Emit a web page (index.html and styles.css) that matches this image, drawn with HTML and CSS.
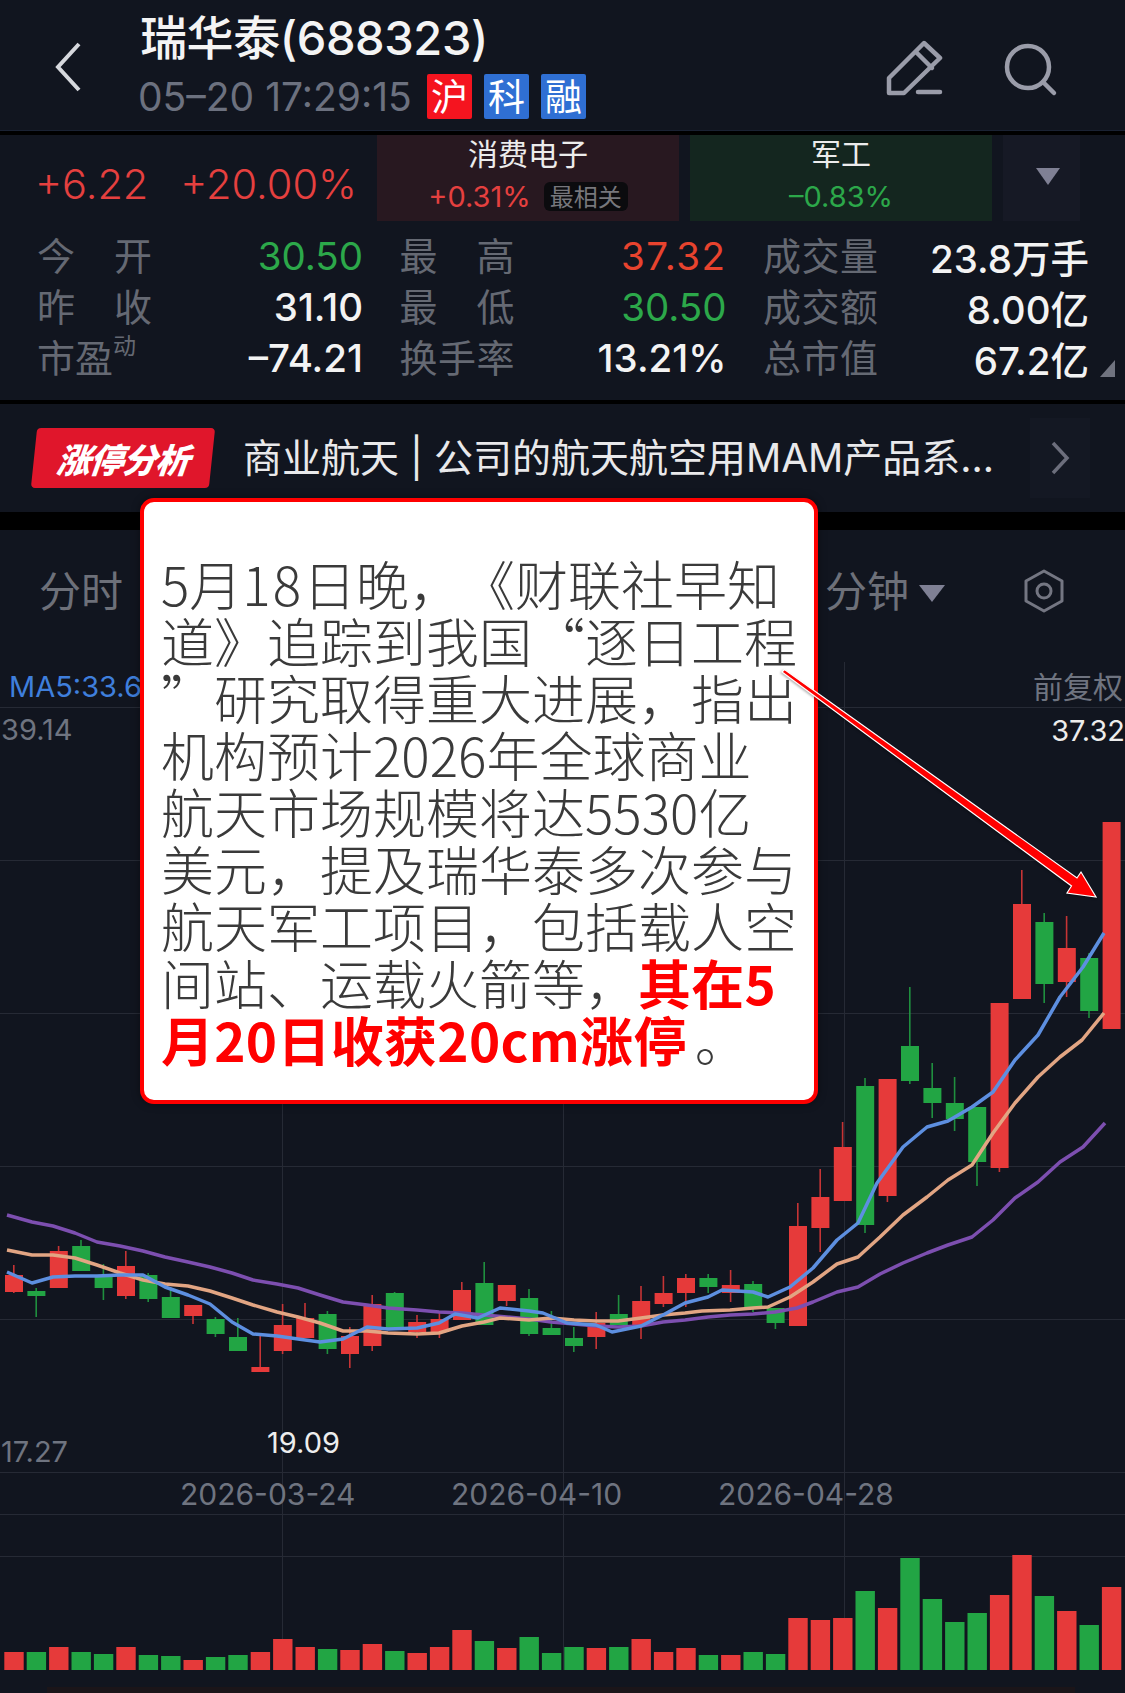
FILE: index.html
```html
<!DOCTYPE html>
<html lang="zh-CN">
<head>
<meta charset="UTF-8" />
<title>瑞华泰(688323)</title>
<meta name="viewport" content="width=device-width, initial-scale=1" />
<link rel="stylesheet" href="styles.css">
</head>
<body>
  <div class="page">
    <!-- TOP BAR -->
    <header class="topbar">
      <svg class="back" viewBox="0 0 28 52"><path d="M25 3 L4 26 L25 49" /></svg>
      <div class="stock">
        <div class="stock-name">瑞华泰(688323)</div>
        <div class="stock-sub">
          <span class="stock-time">05–20 17:29:15</span>
          <span class="tag tag-red">沪</span>
          <span class="tag tag-blue">科</span>
          <span class="tag tag-blue">融</span>
        </div>
      </div>
      <svg class="icon-edit" viewBox="0 0 60 56">
        <path d="M5 53 V38 L40 3 L56 18 L20 53 Z" />
        <path d="M32 12 L48 28" />
        <path d="M34 52 H56" />
      </svg>
      <svg class="icon-search" viewBox="0 0 56 56">
        <circle cx="24" cy="25" r="21" />
        <path d="M39 40 L50 51" />
      </svg>
    </header>

    <!-- QUOTE PANEL -->
    <section class="quote">
      <div class="quote-top">
        <div class="change">
          <span>+6.22</span>
          <span>+20.00%</span>
        </div>
        <div class="sector sector-up">
          <div class="sector-name">消费电子</div>
          <div class="sector-row">
            <span class="up">+0.31%</span>
            <span class="best">最相关</span>
          </div>
        </div>
        <div class="sector sector-down">
          <div class="sector-name">军工</div>
          <div class="sector-row">
            <span class="down">–0.83%</span>
          </div>
        </div>
        <div class="more"><i class="tri"></i></div>
      </div>
      <div class="stats">
        <div class="stat"><span class="lbl">今开</span><span class="val down">30.50</span></div>
        <div class="stat"><span class="lbl">最高</span><span class="val hi">37.32</span></div>
        <div class="stat"><span class="lbl">成交量</span><span class="val">23.8万手</span></div>
        <div class="stat"><span class="lbl">昨收</span><span class="val">31.10</span></div>
        <div class="stat"><span class="lbl">最低</span><span class="val down">30.50</span></div>
        <div class="stat"><span class="lbl">成交额</span><span class="val">8.00亿</span></div>
        <div class="stat"><span class="lbl lbl-left">市盈<sup>动</sup></span><span class="val">–74.21</span></div>
        <div class="stat"><span class="lbl">换手率</span><span class="val">13.21%</span></div>
        <div class="stat"><span class="lbl">总市值</span><span class="val">67.2亿</span></div>
      </div>
      <i class="corner"></i>
    </section>

    <!-- LIMIT UP BANNER -->
    <section class="banner">
      <div class="banner-tag"><span>涨停分析</span></div>
      <div class="banner-text">商业航天 | 公司的航天航空用MAM产品系...</div>
      <div class="banner-next">
        <svg viewBox="0 0 20 34"><path d="M3 2 L17 17 L3 32" /></svg>
      </div>
    </section>

    <!-- CHART -->
    <section class="chart">
      <div class="tabs">
        <span class="tab">分时</span>
        <div class="tabs-right">
          <span class="tab">分钟</span>
          <i class="tri tri-tab"></i>
          <svg class="icon-gear" viewBox="0 0 40 44">
            <path d="M20 2 L38 12 V32 L20 42 L2 32 V12 Z" />
            <circle cx="20" cy="22" r="7" />
          </svg>
        </div>
      </div>
      <svg class="kline" id="kline" viewBox="0 640 1125 1053">
        <text class="t-ma" x="9" y="697">MA5:33.6</text>
        <text class="t-axis" x="1" y="740">39.14</text>
        <text class="t-axis t-cjk" x="1123" y="698" text-anchor="end">前复权</text>
        <text class="t-bright" x="1125" y="741" text-anchor="end">37.32</text>
        <text class="t-axis" x="1" y="1462">17.27</text>
        <text class="t-bright" x="267" y="1453">19.09</text>
        <text class="t-date" x="180" y="1505">2026-03-24</text>
        <text class="t-date" x="451" y="1505">2026-04-10</text>
        <text class="t-date" x="718" y="1505">2026-04-28</text>
      </svg>
    </section>

    <!-- CALLOUT AND ARROW -->
    <div class="callout">
      5月<span class="wide">18</span>日晚，《财联社早知<br>
      道》追踪到我国“逐日工程<br>
      ”研究取得重大进展，指出<br>
      机构预计2026年全球商业<br>
      航天市场规模将达5530亿<br>
      美元，提及瑞华泰多次参与<br>
      航天军工项目，包括载人空<br>
      间站、运载火箭等，<b>其在5</b><br>
      <b class="last">月20日收获20cm涨停</b>。
    </div>
    <svg class="arrow" viewBox="0 0 330 250">
      <path d="M2 12 L4.5 9.5 L297 218 L301 212 L316 237 L287 233 L291.5 226 Z" />
    </svg>
  </div>
  <script src="script.js"></script>
</body>
</html>
```

FILE: styles.css
```css
:root {
  --bg: #11151f;
  --up: #e5403f;
  --down: #2ca84a;
  --label: #656973;
  --font: Inter, "Noto Sans CJK SC", sans-serif;
  --cjk: "Noto Sans CJK SC", sans-serif;
}

* {
  box-sizing: border-box;
}

html,
body {
  margin: 0;
  padding: 0;
  background: #000;
  font-family: var(--font);
}

.page {
  position: relative;
  width: 1125px;
  height: 1693px;
  overflow: hidden;
}

/* ------------ TOP BAR ------------- */
.topbar {
  height: 131px;
  background: var(--bg);
  border-bottom: 1px solid #1a2233;
  display: flex;
  align-items: flex-start;
  padding-left: 54px;
}
.back {
  width: 28px;
  height: 52px;
  margin-top: 41px;
  flex: none;
}
.back path {
  fill: none;
  stroke: #d6d8dd;
  stroke-width: 4;
}
.stock {
  margin-left: 58px;
  flex: 1;
}
.stock-name {
  margin-top: 8px;
  height: 60px;
  line-height: 60px;
  font-size: 47px;
  font-weight: 500;
  letter-spacing: -0.4px;
  color: #f4f4f4;
}
.stock-sub {
  display: flex;
  align-items: center;
  margin-top: 5px;
}
.stock-time {
  font-size: 39px;
  color: #6c717f;
  width: 289px;
  margin-left: -2px;
  white-space: nowrap;
}
.tag {
  width: 45px;
  height: 45px;
  line-height: 43px;
  margin-right: 12px;
  border-radius: 2px;
  text-align: center;
  font-size: 37px;
  color: #fff;
  font-family: var(--cjk);
}
.tag-red { background: #f5141f; }
.tag-blue { background: #2f6fd3; }
.icon-edit {
  width: 60px;
  height: 56px;
  margin: 40px 0 0 0;
  flex: none;
}
.icon-edit path,
.icon-search circle,
.icon-search path {
  fill: none;
  stroke: #9a9ca9;
  stroke-width: 4.5;
  stroke-linecap: round;
  stroke-linejoin: round;
}
.icon-search {
  width: 56px;
  height: 56px;
  margin: 42px 65px 0 60px;
  flex: none;
}

/* ------------ QUOTE ------------- */
.quote {
  position: relative;
  height: 265px;
  margin-top: 4px;
  background: var(--bg);
}
.quote-top {
  height: 86px;
  display: flex;
}
.change {
  width: 377px;
  padding: 24px 0 0 35px;
  display: flex;
  gap: 32px;
  font-size: 41.5px;
  font-weight: 300;
  color: var(--up);
}
.sector {
  width: 302px;
  margin-right: 11px;
  text-align: center;
  font-size: 29px;
}
.sector-up { background: #281820; }
.sector-down { background: #14261f; }
.sector-name {
  height: 36px;
  line-height: 34px;
  font-size: 30px;
  color: #ececec;
  font-family: var(--cjk);
}
.sector-row {
  display: flex;
  justify-content: center;
  align-items: center;
  gap: 13px;
  height: 50px;
}
.up { color: var(--up); }
.down { color: var(--down); }
.hi { color: #e8432e; }
.best {
  height: 29px;
  line-height: 28px;
  padding: 0 6px;
  border-radius: 6px;
  background: #0b0b0e;
  color: #77777c;
  font-size: 24px;
  font-family: var(--cjk);
}
.more {
  width: 77px;
  background: #161925;
  display: flex;
  justify-content: center;
  padding: 33px 0 0 12px;
}
.tri {
  display: block;
  width: 0;
  height: 0;
  border-left: 12px solid transparent;
  border-right: 12px solid transparent;
  border-top: 17px solid #7f8094;
}
.stats {
  display: grid;
  grid-template-columns: 326px 327px 326px;
  column-gap: 36.5px;
  padding: 9px 0 0 37px;
  grid-auto-rows: 51px;
}
.stat {
  display: flex;
  justify-content: space-between;
  align-items: center;
}
.lbl {
  position: relative;
  top: -2px;
  width: 115px;
  font-family: var(--cjk);
  font-size: 38px;
  color: var(--label);
  text-align: justify;
  text-align-last: justify;
  line-height: 51px;
}
.lbl-left {
  text-align-last: left;
}
.lbl sup {
  position: absolute;
  left: 76px;
  top: -1px;
  font-size: 23px;
  line-height: 30px;
}
.val {
  font-size: 38.5px;
  font-weight: 500;
  color: #f3f3f3;
}
.val.down { color: var(--down); font-weight: 400; }
.val.hi { color: #e8432e; font-weight: 400; letter-spacing: 1.5px; }
.corner {
  position: absolute;
  right: 10px;
  bottom: 23px;
  width: 0;
  height: 0;
  border-left: 15px solid transparent;
  border-bottom: 17px solid #70737f;
}

/* ------------ BANNER ------------- */
.banner {
  height: 108px;
  margin-top: 4px;
  background: var(--bg);
  display: flex;
  align-items: center;
  padding: 0 0 0 34px;
}
.banner-tag {
  width: 178px;
  height: 60px;
  background: #e0162b;
  border-radius: 4px;
  transform: skewX(-6deg);
  display: flex;
  align-items: center;
  justify-content: center;
  flex: none;
}
.banner-tag span {
  font-family: var(--cjk);
  font-size: 34px;
  font-weight: 900;
  font-style: italic;
  color: #fff;
  letter-spacing: -1px;
}
.banner-text {
  margin-left: 31px;
  width: 787px;
  white-space: nowrap;
  font-size: 39px;
  color: #e9e9eb;
  line-height: 50px;
}
.banner-next {
  width: 60px;
  height: 80px;
  background: #141823;
  display: flex;
  align-items: center;
  justify-content: center;
}
.banner-next svg {
  width: 20px;
  height: 34px;
}
.banner-next path {
  fill: none;
  stroke: #6c6e7c;
  stroke-width: 3.5;
}

/* ------------ CHART ------------- */
.chart {
  margin-top: 18px;
  height: 1163px;
  background: var(--bg);
}
.tabs {
  height: 110px;
  padding: 33px 0 0 39px;
  display: flex;
  justify-content: space-between;
}
.tabs-right {
  display: flex;
  padding-right: 61px;
}
.tab {
  font-family: var(--cjk);
  font-size: 42px;
  line-height: 52px;
  color: #6d7079;
}
.tri-tab {
  margin: 22px 0 0 10px;
  border-left-width: 13px;
  border-right-width: 13px;
}
.icon-gear {
  width: 40px;
  height: 44px;
  margin: 6px 0 0 79px;
}
.icon-gear path,
.icon-gear circle {
  fill: none;
  stroke: #747682;
  stroke-width: 3;
  stroke-linejoin: round;
}
.kline {
  display: block;
  width: 1125px;
  height: 1053px;
}
.kline .grid {
  stroke: #262a35;
  stroke-width: 1;
}
.kline .ma {
  fill: none;
  stroke-width: 3.5;
  stroke-linejoin: round;
}
.t-ma,
.t-axis,
.t-bright,
.t-date {
  font-family: var(--font);
  font-size: 29px;
}
.t-ma { fill: #3f7fdc; }
.t-axis { fill: #6f7480; }
.t-bright { fill: #ededed; }
.t-cjk { font-size: 30px; }
.t-date {
  fill: #6f7480;
  font-size: 30px;
}

/* ------------ CALLOUT ------------- */
.callout {
  position: absolute;
  left: 140px;
  top: 498px;
  width: 678px;
  height: 606px;
  padding: 53px 0 0 17px;
  background: #fff;
  border: 4px solid #f00;
  border-radius: 14px;
  box-shadow: 0 0 8px rgba(0, 0, 0, 0.4);
  font-family: "Noto Sans CJK SC", sans-serif;
  font-size: 53px;
  font-weight: 300;
  line-height: 57px;
  color: #3a3a3a;
  white-space: nowrap;
  text-spacing-trim: space-all;
}
.callout .wide {
  letter-spacing: 2px;
}
.callout b {
  font-weight: 700;
  color: #f00;
  letter-spacing: 0.3px;
}
.callout .last {
  margin-right: 8px;
}
.arrow {
  position: absolute;
  left: 780px;
  top: 660px;
  width: 330px;
  height: 250px;
  filter: drop-shadow(-1px 1px 1px rgba(0, 0, 0, 0.3));
}
.arrow path {
  fill: #f00;
  stroke: #fff;
  stroke-width: 1.2;
  stroke-linejoin: miter;
}
```

FILE: script.js
```js
// candle data in page pixels: body top, body bottom, wick top, wick bottom, red?
const CANDLES = [
  [1275,1292,1265,1293,1],[1291,1296,1288,1317,0],[1251,1288,1246,1288,1],[1246,1271,1240,1271,0],
  [1275,1288,1264,1300,0],[1266,1296,1251,1299,1],[1275,1299,1273,1302,0],[1297,1318,1287,1318,0],
  [1305,1316,1305,1324,1],[1319,1334,1317,1337,0],[1337,1351,1318,1351,0],[1367,1372,1335,1372,1],
  [1325,1351,1304,1354,1],[1318,1338,1303,1338,1],[1314,1349,1311,1354,0],[1336,1354,1327,1368,1],
  [1304,1346,1295,1351,1],[1293,1328,1292,1328,0],[1322,1332,1315,1338,1],[1319,1332,1313,1338,1],
  [1290,1320,1282,1320,1],[1283,1325,1262,1325,0],[1285,1301,1285,1306,1],[1298,1334,1289,1336,0],
  [1328,1335,1311,1335,0],[1338,1346,1327,1352,0],[1323,1337,1312,1349,1],[1314,1325,1295,1325,0],
  [1301,1325,1286,1339,1],[1293,1304,1276,1307,1],[1278,1293,1274,1307,1],[1278,1287,1274,1293,0],
  [1285,1293,1270,1302,1],[1284,1307,1281,1312,0],[1308,1323,1308,1329,0],[1226,1326,1203,1326,1],
  [1197,1228,1169,1252,1],[1147,1201,1122,1201,1],[1086,1225,1078,1233,0],[1079,1196,1079,1202,1],
  [1046,1081,987,1084,0],[1088,1103,1063,1118,0],[1103,1119,1077,1131,0],[1107,1162,1107,1186,0],
  [1003,1168,1003,1172,1],[904,999,870,999,1],[922,984,913,1003,0],[948,982,916,997,1],
  [958,1011,953,1018,0],[822,1029,822,1029,1]
];

// volume bar tops
const VOLUME = [
  1652,1652,1647,1652,1654,1647,1655,1656,1660,1657,1655,1652,1639,1647,1649,1650,1644,1651,1653,1647,
  1630,1641,1648,1637,1653,1647,1648,1647,1639,1652,1648,1655,1655,1652,1654,1618,1620,1618,1591,1608,
  1558,1599,1622,1613,1595,1555,1596,1611,1625,1587
];

const MA_LINES = [
  { color: '#7d4fb0', pts: '7,1215 32,1222 53,1226 75,1233 97,1242 120,1246 143,1251 165,1257 188,1262 210,1267 232,1273 253,1280 277,1284 298,1288 320,1295 343,1302 367,1305 388,1308 417,1310 439,1312 462,1313 484,1315 507,1317 529,1319 551,1322 574,1324 596,1326 618,1327 641,1326 663,1322 685,1320 708,1317 730,1315 753,1314 775,1312 797,1308 813,1302 837,1292 858,1287 880,1274 903,1263 927,1253 948,1245 972,1237 993,1220 1015,1198 1038,1182 1060,1162 1083,1147 1105,1123' },
  { color: '#e2a583', pts: '7,1250 32,1255 53,1255 75,1258 97,1265 120,1273 143,1280 165,1284 188,1286 210,1291 232,1298 253,1305 277,1312 298,1317 320,1323 343,1331 367,1331 388,1333 417,1334 439,1333 462,1326 484,1322 500,1318 529,1320 551,1318 574,1320 596,1321 618,1321 641,1318 663,1315 685,1313 702,1311 730,1310 753,1308 768,1307 790,1297 813,1282 837,1264 858,1257 880,1237 903,1215 927,1197 948,1180 972,1165 993,1133 1015,1103 1038,1077 1060,1057 1082,1040 1104,1013' },
  { color: '#5d8fe0', pts: '7,1272 32,1283 53,1277 75,1276 97,1276 120,1275 143,1275 165,1287 188,1295 210,1304 232,1322 253,1334 277,1336 298,1339 320,1342 343,1339 367,1327 388,1329 417,1328 439,1323 455,1314 478,1318 500,1308 529,1311 543,1313 567,1323 596,1325 612,1332 641,1326 663,1315 685,1303 708,1297 722,1290 753,1292 768,1297 790,1287 813,1268 837,1240 858,1223 877,1183 903,1147 927,1127 948,1121 972,1107 993,1092 1015,1060 1038,1035 1060,997 1083,967 1104,933' }
];

const UP = '#e63a3a';
const DOWN = '#22a544';
const BASE = 1670;
const PITCH = 22.4;
const NS = 'http://www.w3.org/2000/svg';

const svg = document.getElementById('kline');

function add(tag, attrs, before){
  const el = document.createElementNS(NS, tag);
  for(const k in attrs) el.setAttribute(k, attrs[k]);
  svg.insertBefore(el, before || svg.firstChild);
  return el;
}

const first = svg.firstChild;

[707, 860, 1013, 1166, 1319, 1472, 1514, 1556].forEach(y => {
  add('line', { class: 'grid', x1: 0, x2: 1125, y1: y + 0.5, y2: y + 0.5 }, first);
});
[282, 563, 844].forEach(x => {
  add('line', { class: 'grid', x1: x + 0.5, x2: x + 0.5, y1: 662, y2: BASE }, first);
});

CANDLES.forEach((c, i) => {
  const x = 14 + PITCH * i;
  const fill = c[4] ? UP : DOWN;
  add('rect', { x: x - 1, y: c[2], width: 1.6, height: c[3] - c[2], fill, opacity: 0.85 }, first);
  add('rect', { x: x - 9, y: c[0], width: 18, height: c[1] - c[0], fill }, first);
  add('rect', { x: x - 9.7, y: VOLUME[i], width: 19.4, height: BASE - VOLUME[i], fill }, first);
});

MA_LINES.forEach(l => {
  add('polyline', { class: 'ma', stroke: l.color, points: l.pts }, first);
});

add('rect', { x: 47, y: 1687, width: 1028, height: 6, fill: '#1b1519' }, first);
```
